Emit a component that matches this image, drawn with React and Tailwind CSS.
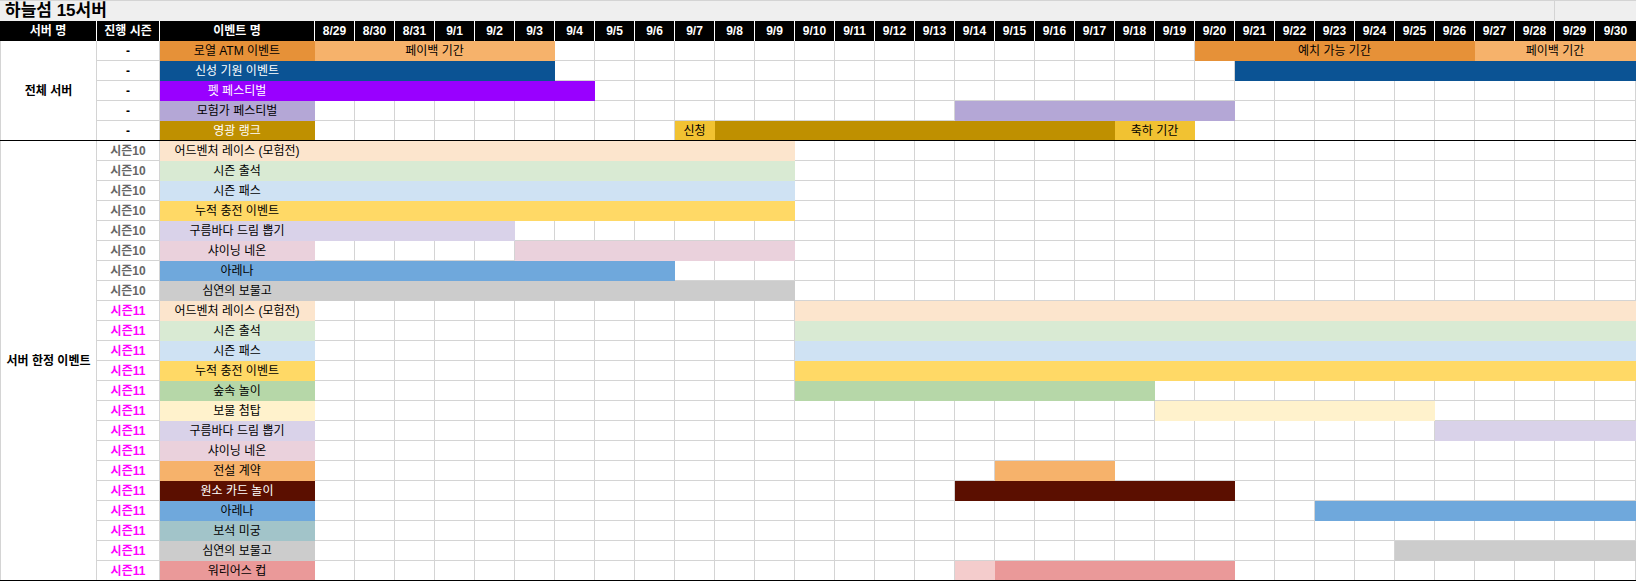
import React from "react";

const DATES = ["8/29", "8/30", "8/31", ...Array.from({ length: 30 }, (_, i) => `9/${i + 1}`)];
const LAST = DATES.length - 1;
const day = (s) => DATES.indexOf(s);

// fill classes (bg + matching border so the fill covers the gridlines)
const F = {
  orange: "bg-[#e69138] border-[#e69138]",
  payback: "bg-[#f6b26b] border-[#f6b26b]",
  navy: "bg-[#0b5394] border-[#0b5394] text-white",
  violet: "bg-[#9900ff] border-[#9900ff] text-white",
  purple: "bg-[#b4a7d6] border-[#b4a7d6]",
  gold: "bg-[#bf9000] border-[#bf9000] text-white",
  sun: "bg-[#f1c232] border-[#f1c232]",
  peach: "bg-[#fce5cd] border-[#fce5cd]",
  mint: "bg-[#d9ead3] border-[#d9ead3]",
  sky: "bg-[#cfe2f3] border-[#cfe2f3]",
  yellow: "bg-[#ffd966] border-[#ffd966]",
  lavender: "bg-[#d9d2e9] border-[#d9d2e9]",
  pink: "bg-[#ead1dc] border-[#ead1dc]",
  blue: "bg-[#6fa8dc] border-[#6fa8dc]",
  gray: "bg-[#cccccc] border-[#cccccc]",
  green: "bg-[#b6d7a8] border-[#b6d7a8]",
  cream: "bg-[#fff2cc] border-[#fff2cc]",
  brown: "bg-[#5b0f00] border-[#5b0f00] text-white",
  teal: "bg-[#a2c4c9] border-[#a2c4c9]",
  rose: "bg-[#ea9999] border-[#ea9999]",
  blush: "bg-[#f4cccc] border-[#f4cccc]",
};

const GROUPS = [
  {
    label: "전체 서버",
    rows: [
      {
        season: "-",
        name: "로열 ATM 이벤트",
        fill: F.orange,
        bars: [
          ["8/29", "9/3", F.payback, "페이백 기간"],
          ["9/20", "9/26", F.orange, "예치 가능 기간"],
          ["9/27", "9/30", F.payback, "페이백 기간"],
        ],
      },
      { season: "-", name: "신성 기원 이벤트", fill: F.navy, bars: [["8/29", "9/3", F.navy], ["9/21", "9/30", F.navy]] },
      { season: "-", name: "펫 페스티벌", fill: F.violet, bars: [["8/29", "9/4", F.violet]] },
      { season: "-", name: "모험가 페스티벌", fill: F.purple, bars: [["9/14", "9/20", F.purple]] },
      {
        season: "-",
        name: "영광 랭크",
        fill: F.gold,
        bars: [
          ["9/7", "9/7", F.sun, "신청"],
          ["9/8", "9/17", F.gold],
          ["9/18", "9/19", F.sun, "축하 기간"],
        ],
      },
    ],
  },
  {
    label: "서버 한정 이벤트",
    rows: [
      { season: "시즌10", name: "어드벤처 레이스 (모험전)", fill: F.peach, bars: [["8/29", "9/9", F.peach]] },
      { season: "시즌10", name: "시즌 출석", fill: F.mint, bars: [["8/29", "9/9", F.mint]] },
      { season: "시즌10", name: "시즌 패스", fill: F.sky, bars: [["8/29", "9/9", F.sky]] },
      { season: "시즌10", name: "누적 충전 이벤트", fill: F.yellow, bars: [["8/29", "9/9", F.yellow]] },
      { season: "시즌10", name: "구름바다 드림 뽑기", fill: F.lavender, bars: [["8/29", "9/2", F.lavender]] },
      { season: "시즌10", name: "샤이닝 네온", fill: F.pink, bars: [["9/3", "9/9", F.pink]] },
      { season: "시즌10", name: "아레나", fill: F.blue, bars: [["8/29", "9/6", F.blue]] },
      { season: "시즌10", name: "심연의 보물고", fill: F.gray, bars: [["8/29", "9/9", F.gray]] },
      { season: "시즌11", name: "어드벤처 레이스 (모험전)", fill: F.peach, bars: [["9/10", "9/30", F.peach]] },
      { season: "시즌11", name: "시즌 출석", fill: F.mint, bars: [["9/10", "9/30", F.mint]] },
      { season: "시즌11", name: "시즌 패스", fill: F.sky, bars: [["9/10", "9/30", F.sky]] },
      { season: "시즌11", name: "누적 충전 이벤트", fill: F.yellow, bars: [["9/10", "9/30", F.yellow]] },
      { season: "시즌11", name: "숲속 놀이", fill: F.green, bars: [["9/10", "9/18", F.green]] },
      { season: "시즌11", name: "보물 첨탑", fill: F.cream, bars: [["9/19", "9/25", F.cream]] },
      { season: "시즌11", name: "구름바다 드림 뽑기", fill: F.lavender, bars: [["9/26", "9/30", F.lavender]] },
      { season: "시즌11", name: "샤이닝 네온", fill: F.pink, bars: [] },
      { season: "시즌11", name: "전설 계약", fill: F.payback, bars: [["9/15", "9/17", F.payback]] },
      { season: "시즌11", name: "원소 카드 놀이", fill: F.brown, bars: [["9/14", "9/20", F.brown]] },
      { season: "시즌11", name: "아레나", fill: F.blue, bars: [["9/23", "9/30", F.blue]] },
      { season: "시즌11", name: "보석 미궁", fill: F.teal, bars: [] },
      { season: "시즌11", name: "심연의 보물고", fill: F.gray, bars: [["9/25", "9/30", F.gray]] },
      { season: "시즌11", name: "워리어스 컵", fill: F.rose, bars: [["9/14", "9/14", F.blush], ["9/15", "9/20", F.rose]] },
    ],
  },
];

const SEASON_COLOR = {
  "-": "text-black",
  시즌10: "text-[#666666]",
  시즌11: "text-[#ff00ff]",
};

const GRID = "border-[#d4d4d4] bg-white";

function Timeline({ bars, edge }) {
  const cells = [];
  let i = 0;
  while (i <= LAST) {
    const bar = bars.find((b) => day(b[0]) === i);
    if (bar) {
      const end = day(bar[1]);
      const span = end - i + 1;
      cells.push(
        <div
          key={i}
          className={`flex shrink-0 items-center justify-center overflow-hidden whitespace-nowrap border-r ${edge} ${bar[2]} ${end === LAST ? "grow" : ""}`}
          style={end === LAST ? undefined : { width: span * 40 }}
        >
          {bar[3]}
        </div>
      );
      i = end + 1;
    } else {
      cells.push(
        <div key={i} className={`shrink-0 border-r ${edge} ${GRID} ${i === LAST ? "grow" : "w-10"}`} />
      );
      i += 1;
    }
  }
  return <div className="flex grow">{cells}</div>;
}

function Row({ row, last }) {
  const edge = last ? "" : "border-b";
  return (
    <div className={`flex ${last ? "h-[19px]" : "h-5"}`}>
      <div className={`flex w-[63px] shrink-0 items-center justify-center border-r font-bold ${edge} ${GRID} ${SEASON_COLOR[row.season]}`}>
        {row.season}
      </div>
      <div className={`flex w-[155px] shrink-0 items-center justify-center overflow-hidden whitespace-nowrap border-r ${edge} ${row.fill}`}>
        {row.name}
      </div>
      <Timeline bars={row.bars} edge={edge} />
    </div>
  );
}

function Group({ group }) {
  return (
    <div className="flex border-b border-black">
      <div className="flex w-[97px] shrink-0 items-center justify-center whitespace-nowrap border-x border-[#d4d4d4] bg-white font-bold">
        {group.label}
      </div>
      <div className="flex grow flex-col">
        {group.rows.map((row, idx) => (
          <Row key={idx} row={row} last={idx === group.rows.length - 1} />
        ))}
      </div>
    </div>
  );
}

export default function App() {
  return (
    <div className="w-[1636px] bg-white font-['Liberation_Sans','Noto_Sans_CJK_KR',sans-serif] text-[12px] leading-none text-black">
      <div className="flex h-[21px] border-t border-[#d4d4d4] bg-[#efefef]">
        <div className="flex w-[1555px] shrink-0 items-end border-r border-[#d4d4d4] px-[5px] pb-[2px] text-[17px] font-bold">
          하늘섬 15서버
        </div>
        <div className="grow" />
      </div>

      <div className="flex h-5 bg-black font-bold text-white">
        <div className="flex w-[97px] shrink-0 items-center justify-center border-r border-white">서버 명</div>
        <div className="flex w-[63px] shrink-0 items-center justify-center border-r border-white">진행 시즌</div>
        <div className="flex w-[155px] shrink-0 items-center justify-center border-r border-white">이벤트 명</div>
        {DATES.map((d, i) => (
          <div
            key={d}
            className={`flex shrink-0 items-center justify-center ${i === LAST ? "grow" : "w-10 border-r border-white"}`}
          >
            {d}
          </div>
        ))}
      </div>

      {GROUPS.map((g) => (
        <Group key={g.label} group={g} />
      ))}
    </div>
  );
}
